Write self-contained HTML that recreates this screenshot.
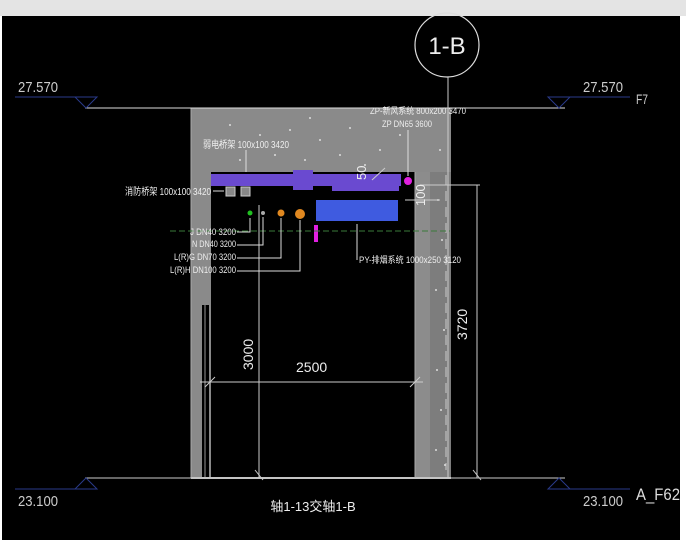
<!DOCTYPE html>
<html><head><meta charset="utf-8"><style>
html,body{margin:0;padding:0;background:#fff;}
svg{display:block;}
text{font-family:"Liberation Sans","Noto Sans CJK SC",sans-serif;}
</style></head><body>
<svg width="686" height="546" viewBox="0 0 686 546" xmlns="http://www.w3.org/2000/svg">
<rect x="0" y="0" width="686" height="546" fill="#ffffff"/>
<rect x="0" y="0" width="686" height="16" fill="#e4e4e4"/>
<rect x="2" y="16" width="678" height="524" fill="#000"/>

<rect x="191" y="108" width="260" height="370" fill="#8a8a8a"/>
<rect x="211" y="172" width="204" height="306" fill="#000"/>
<rect x="415" y="172" width="36" height="306" fill="#8c8c8c"/>
<rect x="430" y="172" width="21" height="306" fill="#7d7d7d"/>
<rect x="202" y="305" width="7" height="173" fill="#000"/>
<line x1="205" y1="305" x2="205" y2="478" stroke="#999" stroke-width="1"/>
<line x1="191" y1="478" x2="451" y2="478" stroke="#bbb" stroke-width="2"/>
<line x1="191" y1="108" x2="191" y2="478" stroke="#aaa"/>
<line x1="415" y1="172" x2="415" y2="478" stroke="#aaa"/>
<g fill="#ddd">
<circle cx="230" cy="125" r="1"/><circle cx="260" cy="135" r="1"/><circle cx="290" cy="130" r="1"/><circle cx="320" cy="140" r="1"/><circle cx="350" cy="128" r="1"/><circle cx="275" cy="155" r="1"/><circle cx="305" cy="160" r="1"/><circle cx="340" cy="155" r="1"/><circle cx="240" cy="160" r="1"/><circle cx="380" cy="150" r="1"/><circle cx="400" cy="135" r="1"/><circle cx="220" cy="145" r="1"/><circle cx="365" cy="165" r="1"/><circle cx="310" cy="118" r="1"/>
<circle cx="438" cy="200" r="1"/><circle cx="442" cy="240" r="1"/><circle cx="436" cy="290" r="1"/><circle cx="444" cy="330" r="1"/><circle cx="437" cy="370" r="1"/><circle cx="441" cy="410" r="1"/><circle cx="436" cy="450" r="1"/><circle cx="445" cy="465" r="1"/><circle cx="440" cy="150" r="1"/>
</g>
<line x1="446" y1="175" x2="446" y2="470" stroke="#ccc" stroke-dasharray="10 6"/>

<line x1="85" y1="108" x2="565" y2="108" stroke="#ddd"/>
<line x1="85" y1="478" x2="565" y2="478" stroke="#ccc"/>
<line x1="15" y1="97" x2="97" y2="97" stroke="#2a3a8a"/>
<path d="M75 97 L97 97 L86 108 Z" fill="none" stroke="#2a3a8a"/>
<line x1="548" y1="97" x2="630" y2="97" stroke="#2a3a8a"/>
<path d="M548 97 L570 97 L559 108 Z" fill="none" stroke="#2a3a8a"/>
<line x1="15" y1="489" x2="97" y2="489" stroke="#2a3a8a"/>
<path d="M75 489 L97 489 L86 478 Z" fill="none" stroke="#2a3a8a"/>
<line x1="548" y1="489" x2="630" y2="489" stroke="#2a3a8a"/>
<path d="M548 489 L570 489 L559 478 Z" fill="none" stroke="#2a3a8a"/>
<text x="18" y="92" fill="#ccc" font-size="15" textLength="40" lengthAdjust="spacingAndGlyphs">27.570</text>
<text x="583" y="92" fill="#ccc" font-size="15" textLength="40" lengthAdjust="spacingAndGlyphs">27.570</text>
<text x="636" y="104" fill="#ccc" font-size="14" textLength="12" lengthAdjust="spacingAndGlyphs">F7</text>
<text x="18" y="506" fill="#ccc" font-size="15" textLength="40" lengthAdjust="spacingAndGlyphs">23.100</text>
<text x="583" y="506" fill="#ccc" font-size="15" textLength="40" lengthAdjust="spacingAndGlyphs">23.100</text>
<text x="636" y="500" fill="#ddd" font-size="17" textLength="44" lengthAdjust="spacingAndGlyphs">A_F62</text>

<circle cx="447" cy="45" r="32" fill="none" stroke="#ddd" stroke-width="1.2"/>
<text x="447" y="54" fill="#eee" font-size="24" text-anchor="middle">1-B</text>
<line x1="448" y1="77" x2="448" y2="478" stroke="#ccc"/>

<line x1="259" y1="205" x2="259" y2="478" stroke="#ccc"/>
<line x1="477" y1="185" x2="477" y2="478" stroke="#ccc"/>
<line x1="200" y1="382" x2="423" y2="382" stroke="#ccc"/>
<line x1="205" y1="387" x2="215" y2="377" stroke="#ccc"/><line x1="410" y1="387" x2="420" y2="377" stroke="#ccc"/>
<line x1="255" y1="470" x2="263" y2="480" stroke="#ccc"/><line x1="473" y1="470" x2="481" y2="480" stroke="#ccc"/>
<line x1="420" y1="185" x2="480" y2="185" stroke="#ccc"/>
<text x="296" y="372" fill="#eee" font-size="14">2500</text>
<text transform="translate(253,370) rotate(-90)" fill="#eee" font-size="14">3000</text>
<text transform="translate(467,340) rotate(-90)" fill="#eee" font-size="14">3720</text>
<line x1="405" y1="200" x2="440" y2="200" stroke="#ccc"/>

<rect x="211" y="174" width="190" height="12" fill="#6a4ad0"/>
<rect x="293" y="170" width="20" height="20" fill="#6a4ad0"/>
<rect x="332" y="174" width="67" height="17" fill="#6a4ad0"/>
<rect x="316" y="200" width="82" height="21" fill="#3f5be0"/>
<circle cx="408" cy="181" r="4" fill="#e020e0"/>
<rect x="314" y="225" width="4" height="17" fill="#e020e0"/>
<rect x="226" y="187" width="9" height="9" fill="#888" stroke="#ccc"/>
<rect x="241" y="187" width="9" height="9" fill="#888" stroke="#ccc"/>
<circle cx="250" cy="213" r="2.5" fill="#20c020"/>
<circle cx="263" cy="213" r="2" fill="#aaa"/>
<circle cx="281" cy="213" r="3.5" fill="#e08820"/>
<circle cx="300" cy="214" r="5" fill="#e08820"/>
<text transform="translate(366,180) rotate(-90)" fill="#eee" font-size="13">50</text>
<text transform="translate(425,206) rotate(-90)" fill="#eee" font-size="13">100</text>
<line x1="372" y1="180" x2="385" y2="168" stroke="#ccc"/>

<line x1="170" y1="231" x2="450" y2="231" stroke="#3a7a3a" stroke-dasharray="6 3"/>

<g stroke="#ddd" fill="none">
<path d="M246 150 V172"/><path d="M213 191 H224"/>
<path d="M250 218 V232 H237"/><path d="M263 217 V245 H237"/><path d="M281 218 V258 H237"/><path d="M300 220 V271 H237"/>
<path d="M357 260 V224"/><path d="M408 130 V176"/>
</g>
<g fill="#eee" font-size="9">
<text x="125" y="195" font-size="10" textLength="86" lengthAdjust="spacingAndGlyphs">消防桥架 100x100 3420</text>
<text x="203" y="148" font-size="10" textLength="86" lengthAdjust="spacingAndGlyphs">弱电桥架 100x100 3420</text>
<text x="370" y="114" textLength="96" lengthAdjust="spacingAndGlyphs">ZP-新风系统 800x200 3470</text>
<text x="382" y="127" textLength="50" lengthAdjust="spacingAndGlyphs">ZP DN65 3600</text>
<text x="190" y="235" textLength="46" lengthAdjust="spacingAndGlyphs">J DN40 3200</text>
<text x="192" y="247" textLength="44" lengthAdjust="spacingAndGlyphs">N DN40 3200</text>
<text x="174" y="260" textLength="62" lengthAdjust="spacingAndGlyphs">L(R)G DN70 3200</text>
<text x="170" y="273" textLength="66" lengthAdjust="spacingAndGlyphs">L(R)H DN100 3200</text>
<text x="359" y="263" textLength="102" lengthAdjust="spacingAndGlyphs">PY-排烟系统 1000x250 3120</text>
</g>
<text x="313" y="511" fill="#eee" font-size="13" text-anchor="middle">轴1-13交轴1-B</text>
</svg>
</body></html>
